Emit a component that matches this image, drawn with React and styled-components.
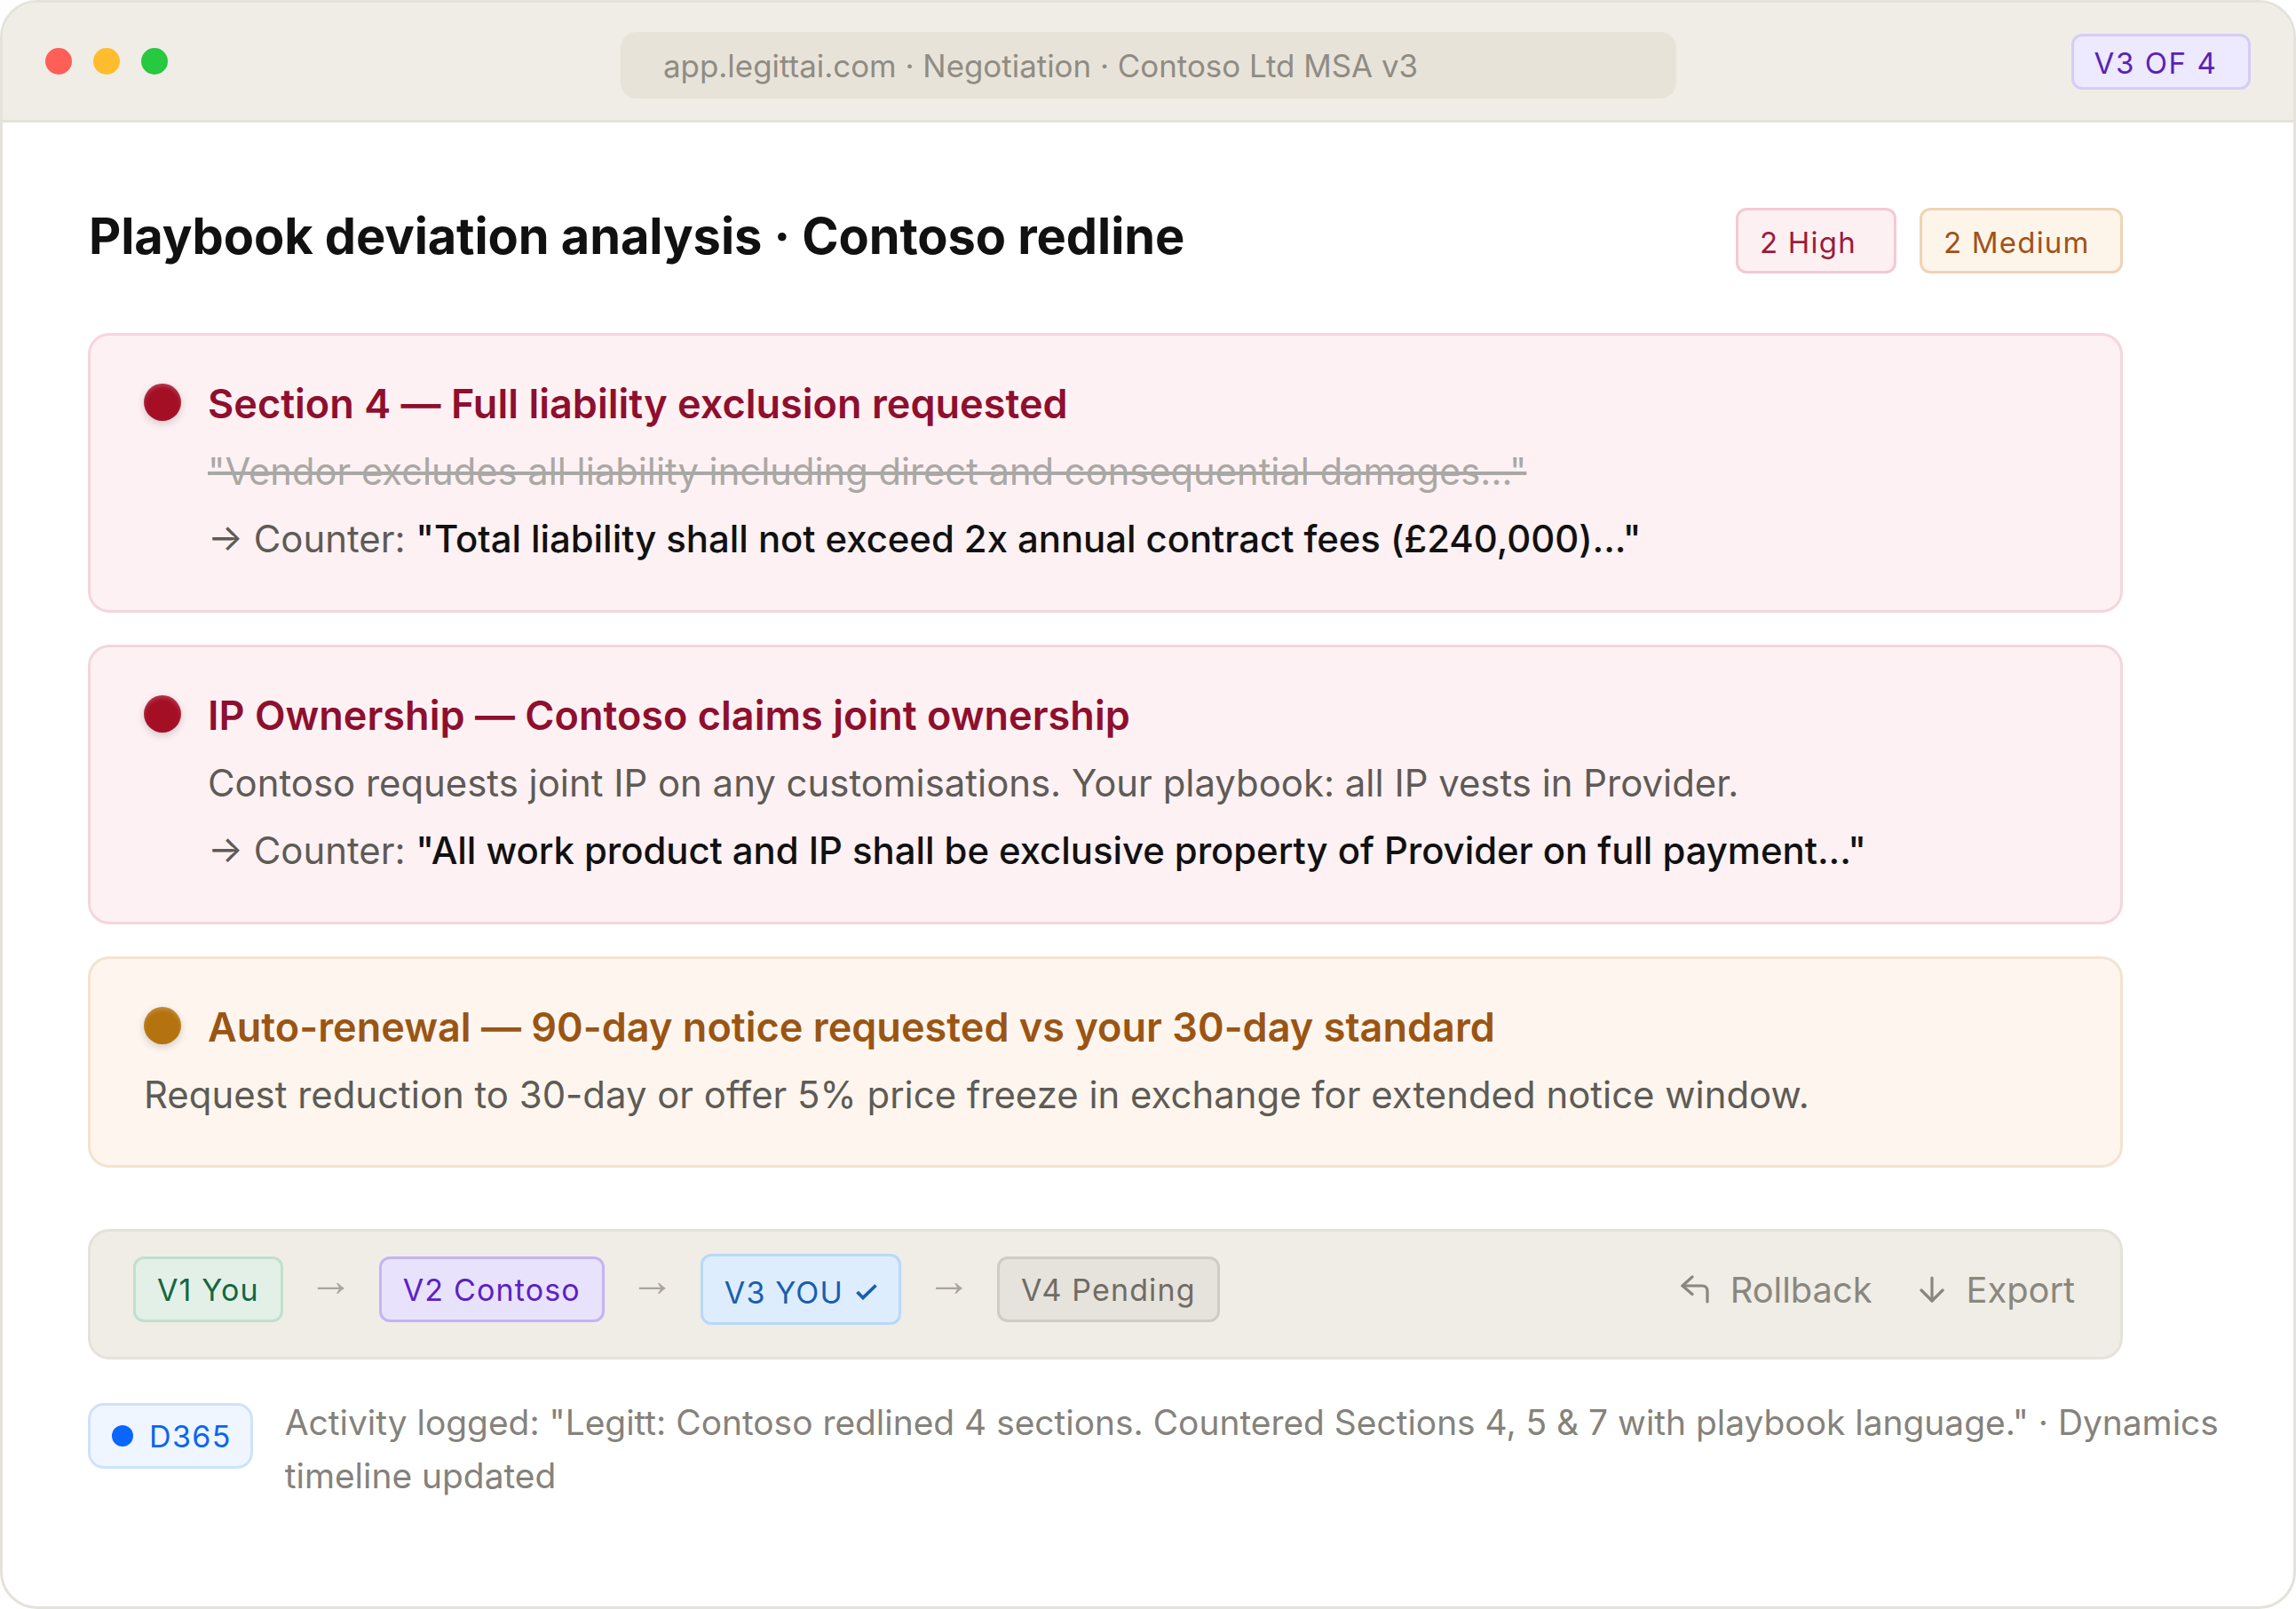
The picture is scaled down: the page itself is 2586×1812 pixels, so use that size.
import React from "react";
import styled, { createGlobalStyle } from "styled-components";

const Global = createGlobalStyle`
  html, body { margin: 0; padding: 0; background: #fff; }
  * { box-sizing: border-box; }
`;

const Win = styled.div`
  width: 2586px; height: 1812px; background: #fff;
  border: 3px solid #e5e2db; border-radius: 42px; overflow: hidden;
  font-family: Inter, "Liberation Sans", sans-serif;
`;
const TitleBar = styled.div`
  height: 135px; background: #f0ede6; border-bottom: 3px solid #e5e2db;
  display: flex; align-items: center; padding: 0 48px 0 48px;
`;
const Dots = styled.div`display: flex; gap: 24px;`;
const Dot = styled.span`width: 30px; height: 30px; border-radius: 50%; background: ${p => p.$c};`;
const Address = styled.div`
  margin-left: 510px; width: 1189px; height: 75px; border-radius: 18px; background: #e8e3d9;
  display: flex; align-items: center; padding: 0 48px; margin-top: 9px;
  font-size: 34.9px; color: #8f8c84;
`;
const VersionTag = styled.div`
  margin-left: auto; height: 63px; width: 202px; border-radius: 12px;
  background: #ede9fe; border: 3px solid #d6ccf8; color: #5b21b6;
  display: flex; align-items: center; justify-content: center;
  font-size: 33px; letter-spacing: 1.6px; padding: 3px 12px 0 0;
`;
const Body = styled.div`padding: 0 50px 0 96px;`;
const Head = styled.div`
  width: 2292px; height: 237px; display: flex; align-items: flex-start; justify-content: space-between;
  padding-top: 96px;
`;
const Title = styled.h1`
  margin: -4px 0 0 1px; font-size: 56px; line-height: 72px; font-weight: 700; color: #111; letter-spacing: -0.1px;
`;
const Badges = styled.div`display: flex; gap: 26px;`;
const Badge = styled.span`
  width: ${p => p.$w}px; height: 74px; padding: 3px 0 0 24px; border-radius: 12px; display: flex; align-items: center;
  font-size: 33px; letter-spacing: 1.2px;
  background: ${p => p.$bg}; border: 3px solid ${p => p.$bd}; color: ${p => p.$fg};
`;
const Cards = styled.div`width: 2292px; display: flex; flex-direction: column; gap: 36px;`;
const Card = styled.div`
  border-radius: 24px; padding: 46px 60px 0; height: ${p => p.$h}px;
  background: ${p => p.$bg}; border: 3px solid ${p => p.$bd};
`;
const CardHead = styled.div`display: flex; align-items: center; gap: 30px; height: 60px;`;
const Marker = styled.span`
  width: 42px; height: 42px; border-radius: 50%; background: ${p => p.$c};
  box-shadow: 0 3px 8px rgba(0,0,0,.18), inset 0 3px 4px rgba(255,255,255,.18); margin-top: -3px;
`;
const CardTitle = styled.div`font-size: 45px; font-weight: 600; color: ${p => p.$c}; letter-spacing: 0.02px;`;
const Lines = styled.div`padding-left: ${p => p.$indent || 0}px; margin-top: 9px;`;
const Line = styled.div`
  font-size: 41.9px; line-height: 76px; color: #5e5b56; height: 76px; white-space: nowrap;
`;
const Struck = styled(Line)`font-size: 41.7px; color: #aaa8a4; text-decoration: line-through;`;
const Quote = styled.span`color: #111; font-weight: 450; letter-spacing: -0.05px;`;
const Bar = styled.div`
  width: 2292px; height: 147px; margin-top: 69px; border-radius: 24px;
  background: #f0ede6; border: 3px solid #e5e2db;
  display: flex; align-items: center; padding: 0 51px 11px 48px; gap: 36px;
`;
const Pill = styled.span`
  height: ${p => p.$h || 74}px; padding: 0 24px; border-radius: 12px; display: flex; align-items: center;
  font-size: 34px; letter-spacing: 1.15px; white-space: nowrap;
  background: ${p => p.$bg}; border: 3px solid ${p => p.$bd}; color: ${p => p.$fg};
`;
const CurrentPill = styled(Pill)`padding-top: 6px; gap: 14px;`;
const Arrow = styled.span`
  width: 36px; display: flex; justify-content: center;
  font-family: "Liberation Sans", sans-serif; font-size: 50px; line-height: 36px; color: #aaa69e; margin-top: -20px;
`;
const Actions = styled.div`margin-left: auto; display: flex; gap: 52px;`;
const Action = styled.span`
  display: flex; align-items: center; gap: 24px;
  font-size: 39.8px; color: #8a877f; white-space: nowrap;
`;
const Foot = styled.div`display: flex; gap: 36px; margin-top: 49px; align-items: flex-start;`;
const Crm = styled.span`
  flex: none; height: 74px; padding: 0 21px 0 24px; border-radius: 18px; display: flex; align-items: center; gap: 18px;
  background: #eff6ff; border: 3px solid #cfe2fc; color: #0a66f0; font-size: 34px; letter-spacing: 1.36px;
`;
const CrmDot = styled.span`width: 24px; height: 24px; border-radius: 50%; background: #0a66ff;`;
const Note = styled.p`margin: -8px 0 0; font-size: 38.9px; line-height: 60px; color: #85827b;`;

const PINK = { $bg: "#fef1f4", $bd: "#f5d5de" };
const AMBER = { $bg: "#fef6ee", $bd: "#f3e3cf" };

const RollbackIcon = () => (
  <svg width="32" height="32" viewBox="0 0 32 32" fill="none" stroke="#8a877f" strokeWidth="3.2" strokeLinecap="round" strokeLinejoin="round">
    <path d="M13 2 L2 12 L13 21.5" />
    <path d="M2 12 H24 Q30 12 30 18 V30" />
  </svg>
);
const ExportIcon = () => (
  <svg width="30" height="30" viewBox="0 0 30 30" fill="none" stroke="#8a877f" strokeWidth="3.2" strokeLinecap="round" strokeLinejoin="round">
    <path d="M15 2 V28" />
    <path d="M3 16 L15 28 L27 16" />
  </svg>
);
const CheckIcon = () => (
  <svg width="24" height="18" viewBox="0 0 24 18" fill="none" stroke="#175fb0" strokeWidth="3.8">
    <path d="M1.5 9 L8 15.5 L22.5 1.5" />
  </svg>
);

export default function App() {
  return (
    <Win>
      <Global />
      <TitleBar>
        <Dots>
          <Dot $c="#ff5f57" /><Dot $c="#febc2e" /><Dot $c="#28c840" />
        </Dots>
        <Address>app.legittai.com · Negotiation · Contoso Ltd MSA v3</Address>
        <VersionTag>V3 OF 4</VersionTag>
      </TitleBar>
      <Body>
        <Head>
          <Title>Playbook deviation analysis · Contoso redline</Title>
          <Badges>
            <Badge $w={181} $bg="#fdf0f3" $bd="#f3c9d5" $fg="#9b1c3c">2 High</Badge>
            <Badge $w={229} $bg="#fdf5ea" $bd="#efd3b5" $fg="#a0521a">2 Medium</Badge>
          </Badges>
        </Head>
        <Cards>
          <Card {...PINK} $h={315}>
            <CardHead>
              <Marker $c="#a50f26" />
              <CardTitle $c="#8e0f2e">Section 4 — Full liability exclusion requested</CardTitle>
            </CardHead>
            <Lines $indent={72}>
              <Struck>"Vendor excludes all liability including direct and consequential damages..."</Struck>
              <Line>→ Counter: <Quote>"Total liability shall not exceed 2x annual contract fees (£240,000)..."</Quote></Line>
            </Lines>
          </Card>
          <Card {...PINK} $h={315}>
            <CardHead>
              <Marker $c="#a50f26" />
              <CardTitle $c="#8e0f2e">IP Ownership — Contoso claims joint ownership</CardTitle>
            </CardHead>
            <Lines $indent={72}>
              <Line>Contoso requests joint IP on any customisations. Your playbook: all IP vests in Provider.</Line>
              <Line>→ Counter: <Quote>"All work product and IP shall be exclusive property of Provider on full payment..."</Quote></Line>
            </Lines>
          </Card>
          <Card {...AMBER} $h={238}>
            <CardHead>
              <Marker $c="#b4730f" />
              <CardTitle $c="#9a5514">Auto-renewal — 90-day notice requested vs your 30-day standard</CardTitle>
            </CardHead>
            <Lines>
              <Line>Request reduction to 30-day or offer 5% price freeze in exchange for extended notice window.</Line>
            </Lines>
          </Card>
        </Cards>
        <Bar>
          <Pill $bg="#e2f0e7" $bd="#c0e0cd" $fg="#14663f">V1 You</Pill>
          <Arrow>→</Arrow>
          <Pill $bg="#e9e2fd" $bd="#c5b3f5" $fg="#5b21c6">V2 Contoso</Pill>
          <Arrow>→</Arrow>
          <CurrentPill $h={80} $bg="#deedfe" $bd="#b9d8f8" $fg="#175fb0">V3 YOU <CheckIcon /></CurrentPill>
          <Arrow>→</Arrow>
          <Pill $bg="#e6e3dc" $bd="#cfccc5" $fg="#6f6c65">V4 Pending</Pill>
          <Actions>
            <Action><RollbackIcon />Rollback</Action>
            <Action><ExportIcon />Export</Action>
          </Actions>
        </Bar>
        <Foot>
          <Crm><CrmDot />D365</Crm>
          <Note>Activity logged: "Legitt: Contoso redlined 4 sections. Countered Sections 4, 5 &amp; 7 with playbook language." · Dynamics timeline updated</Note>
        </Foot>
      </Body>
    </Win>
  );
}
